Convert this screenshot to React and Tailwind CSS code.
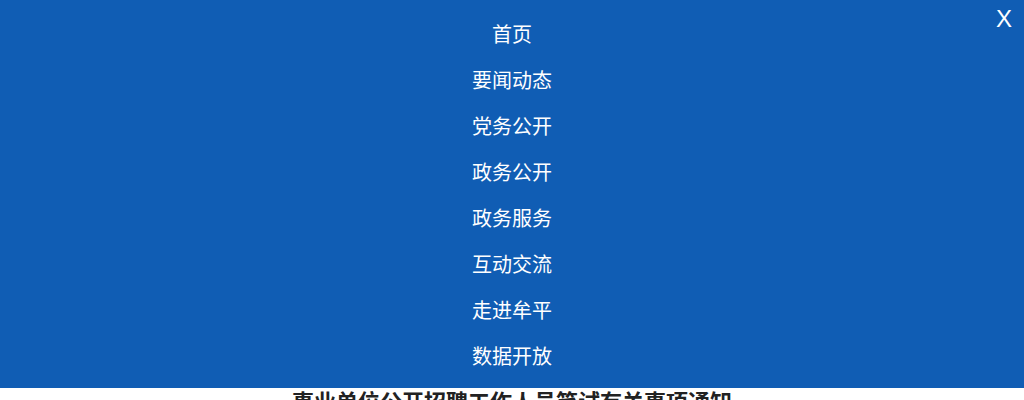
import React from "react";

const items = ["首页", "要闻动态", "党务公开", "政务公开", "政务服务", "互动交流", "走进牟平", "数据开放"];

export default function App() {
  return (
    <div className="w-[1024px] h-[400px] overflow-hidden bg-white" style={{ fontFamily: '"Liberation Sans", "Noto Sans CJK SC", sans-serif' }}>
      <div className="relative h-[388px] bg-[#105db4] pt-[12px]">
        <ul className="flex flex-col items-center">
          {items.map((t) => (
            <li key={t} className="h-[46px] leading-[46px] text-[20px] text-white">{t}</li>
          ))}
        </ul>
        <div className="absolute right-[12px] top-[4px] text-[24px] leading-[30px] text-white">X</div>
      </div>
      <h1 className="text-center text-[22px] leading-[30px] font-bold text-[#222]">事业单位公开招聘工作人员笔试有关事项通知</h1>
    </div>
  );
}
